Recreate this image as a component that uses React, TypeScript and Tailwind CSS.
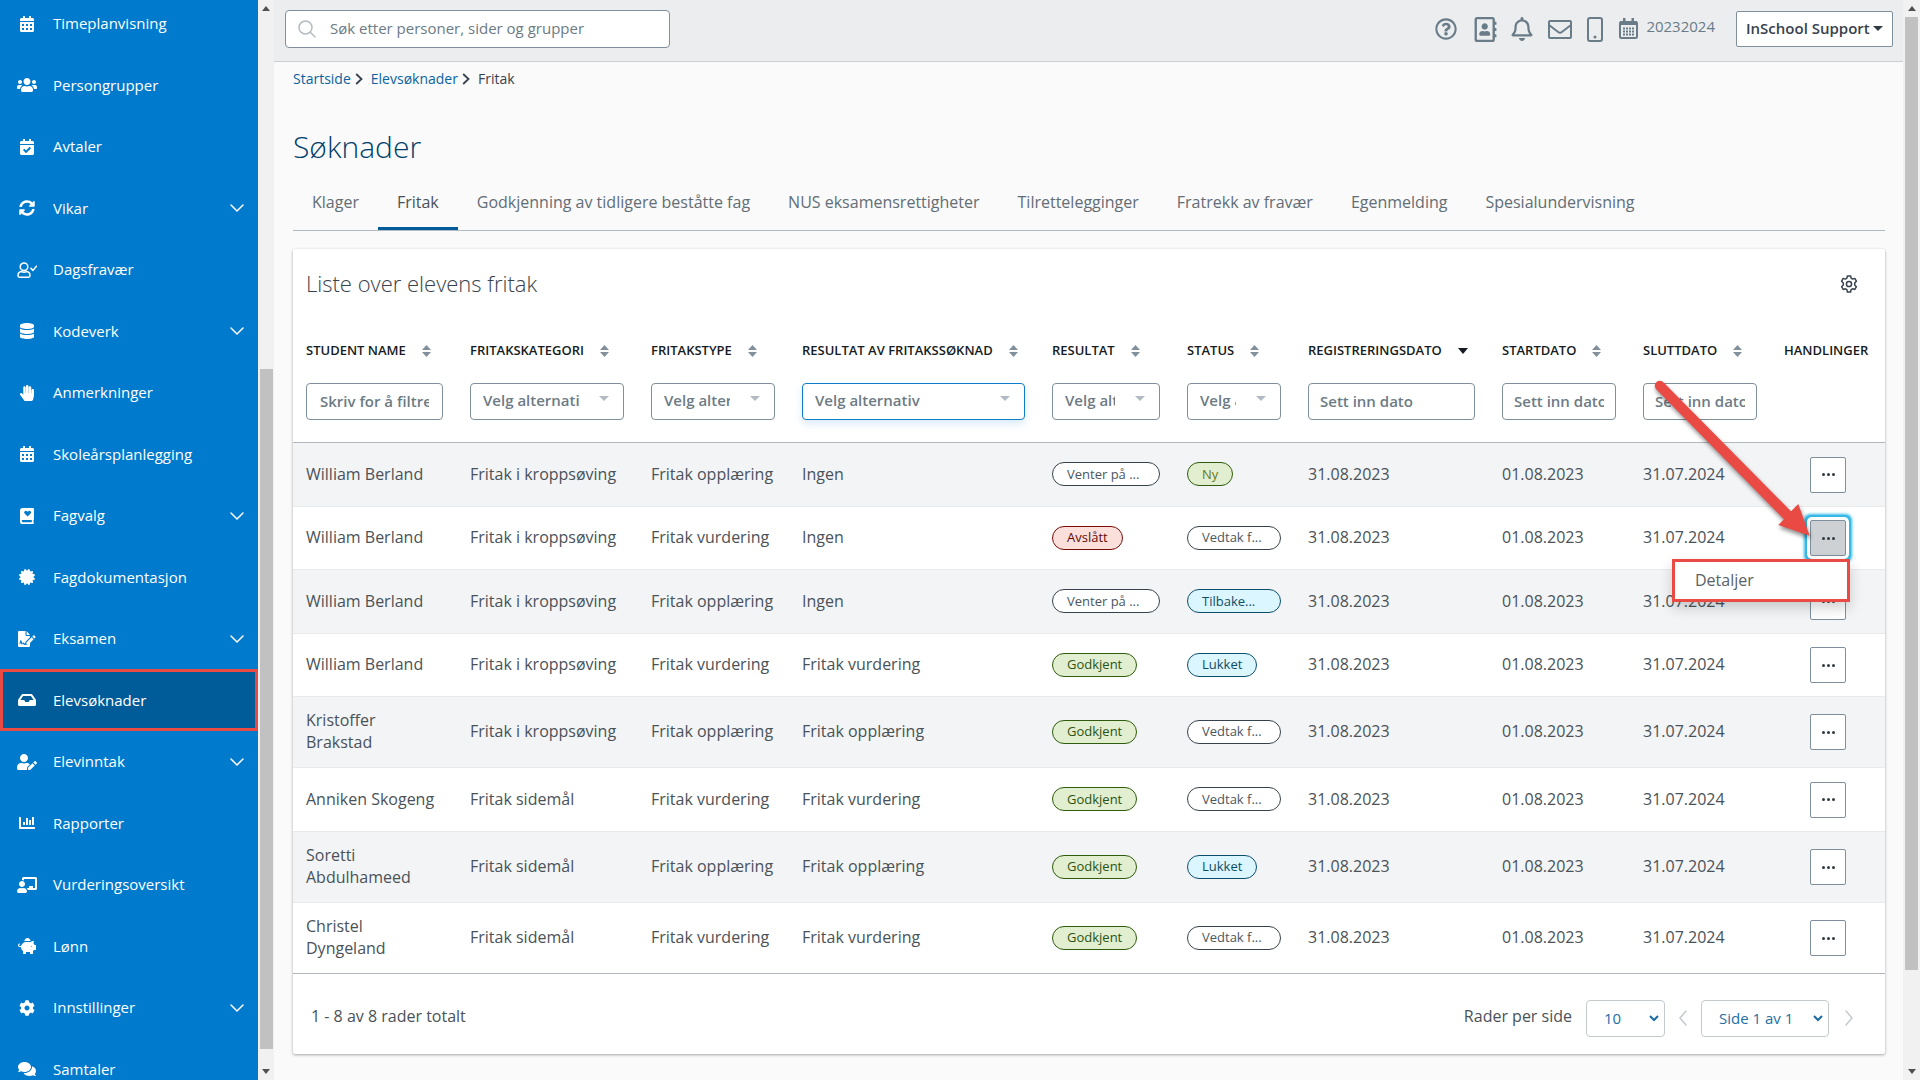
import React from "react";
import {
  FaCalendarAlt, FaUsers, FaCalendarCheck, FaSyncAlt, FaDatabase, FaHandPaper, FaCertificate, FaInbox, FaUserEdit,
  FaChartBar, FaChalkboardTeacher, FaPiggyBank, FaCog, FaComments, FaRegQuestionCircle, FaRegAddressBook, FaRegBell,
} from "react-icons/fa";

type IconProps = { className?: string };

const UserCheck = ({ className }: IconProps) => (
  <svg className={className} viewBox="0 0 20 16" fill="none" stroke="currentColor" strokeWidth="1.5" strokeLinecap="round" strokeLinejoin="round" aria-hidden="true">
    <circle cx="7" cy="4.8" r="3.8" />
    <path d="M4.6 9.6C2.4 9.8 1 11.6 1 13.6c0 1 .5 1.6 1.4 1.6h9.2c.9 0 1.4-.6 1.4-1.6 0-2-1.4-3.8-3.6-4-1.5.7-3.3.7-4.8 0z" />
    <path d="M14 6.4l2 2 3.4-4.2" />
  </svg>
);

const HeartBook = ({ className }: IconProps) => (
  <svg className={className} viewBox="0 0 14 16" aria-hidden="true">
    <path fill="currentColor" fillRule="evenodd" d="M2.6 0H13a1 1 0 0 1 1 1v10a1 1 0 0 1-.5.9v2.3a.9.9 0 0 1 .5.8 1 1 0 0 1-1 1H2.6A2.6 2.6 0 0 1 0 13.400V2.6A2.6 2.6 0 0 1 2.6 0zM2.8 12a1 1 0 0 0 0 2.200h9V12zM7.6 8.6l3-3a1.7 1.7 0 0 0-2.400-2.400l-.6.6-.6-.6a1.7 1.7 0 0 0-2.400 2.400z" />
  </svg>
);

const FileSign = ({ className }: IconProps) => (
  <svg className={className} viewBox="0 0 18 16" aria-hidden="true">
    <path fill="currentColor" fillRule="evenodd" d="M1 0h6.5v4a1 1 0 0 0 1 1H12v1.300L7.3 11v1.800c-.5 0-.8-.2-1-.7-.5-.9-1.600-.9-2.100-.1l-.8-2.200c-.2-.6-1-.6-1.200 0L1.400 13h.9l.5-1.500.6 1.700c.2.400.7.400.9.100l.3-.6c.1-.2.4-.2.5 0 .4.800 1.100 1.200 2.100 1.200h1.600l3.200-3V15a1 1 0 0 1-1 1H1a1 1 0 0 1-1-1V1a1 1 0 0 1 1-1z" />
    <path fill="currentColor" d="M8.6 0L12 3.9H8.6zM8.4 11.4l5.2-5.2 2.1 2.1-5.2 5.2H8.4zM14.3 5.5l.9-.9a.9.9 0 0 1 1.200 0l.9.9a.9.9 0 0 1 0 1.200l-.9.9z" />
  </svg>
);

const Mail = () => (
  <svg className="h-[19px] w-6" viewBox="0 0 24 19" fill="none" stroke="currentColor" strokeWidth="2" strokeLinejoin="round" aria-hidden="true">
    <rect x="1" y="1" width="22" height="17" rx="1" />
    <path d="M1 5l9.500 7.300a2.500 2.500 0 0 0 3 0L23 5" />
  </svg>
);

const Phone = () => (
  <svg className="h-[25px] w-4" viewBox="0 0 16 25" aria-hidden="true">
    <rect x="1" y="1" width="14" height="23" rx="2" fill="none" stroke="currentColor" strokeWidth="2" />
    <circle cx="8" cy="20" r="1.5" fill="currentColor" />
  </svg>
);

const Calendar = () => (
  <svg className="h-[21px] w-[19px]" viewBox="0 0 19 21" aria-hidden="true">
    <rect x="1" y="4" width="17" height="16" rx="1.5" fill="none" stroke="currentColor" strokeWidth="2" />
    <path fill="currentColor" d="M1 3h17v4H1zM4 0h2.500v4H4zM12.500 0H15v4h-2.500z" />
    <path stroke="currentColor" strokeWidth="2" strokeDasharray="2 1" d="M4 10.500h11M4 13.500h11M4 16.500h11" />
  </svg>
);

const Chevron = ({ className, d }: { className?: string; d: string }) => (
  <svg className={className} viewBox="0 0 16 16" fill="none" stroke="currentColor" strokeWidth="1.5" strokeLinecap="round" aria-hidden="true">
    <path d={d} />
  </svg>
);
const DOWN = "M2 5l6 6 6-6";
const RIGHT = "M5 1l6 7-6 7";
const LEFT = "M11 1L5 8l6 7";

const Crumb = () => (
  <svg className="mr-2 ml-1 h-3 w-2 text-[#37424c]" viewBox="0 0 8 12" fill="none" stroke="currentColor" strokeWidth="1.8" aria-hidden="true">
    <path d="M1.200 1L6.500 6l-5.300 5" />
  </svg>
);

const Gear = () => (
  <svg className="size-[18px]" viewBox="0 0 18 18" fill="none" stroke="currentColor" strokeWidth="1.5" strokeLinejoin="round" aria-hidden="true">
    <circle cx="9" cy="9" r="2.6" />
    <path d="M7.400 1h3.200l.5 2.200 1.500.9 2.200-.7 1.600 2.800L14.700 8v2l1.700 1.700-1.600 2.800-2.200-.7-1.500.9-.5 2.300H7.400l-.5-2.300-1.500-.9-2.200.7-1.600-2.800L3.300 10V8L1.600 6.200l1.600-2.800 2.200.7 1.500-.9z" />
  </svg>
);

const menu: { label: string; icon: React.ComponentType<IconProps>; sub?: boolean; active?: boolean }[] = [
  { label: "Timeplanvisning", icon: FaCalendarAlt },
  { label: "Persongrupper", icon: FaUsers },
  { label: "Avtaler", icon: FaCalendarCheck },
  { label: "Vikar", icon: FaSyncAlt, sub: true },
  { label: "Dagsfravær", icon: UserCheck },
  { label: "Kodeverk", icon: FaDatabase, sub: true },
  { label: "Anmerkninger", icon: FaHandPaper },
  { label: "Skoleårsplanlegging", icon: FaCalendarAlt },
  { label: "Fagvalg", icon: HeartBook, sub: true },
  { label: "Fagdokumentasjon", icon: FaCertificate },
  { label: "Eksamen", icon: FileSign, sub: true },
  { label: "Elevsøknader", icon: FaInbox, active: true },
  { label: "Elevinntak", icon: FaUserEdit, sub: true },
  { label: "Rapporter", icon: FaChartBar },
  { label: "Vurderingsoversikt", icon: FaChalkboardTeacher },
  { label: "Lønn", icon: FaPiggyBank },
  { label: "Innstillinger", icon: FaCog, sub: true },
  { label: "Samtaler", icon: FaComments },
];

const tabs = ["Klager", "Fritak", "Godkjenning av tidligere beståtte fag", "NUS eksamensrettigheter", "Tilrettelegginger", "Fratrekk av fravær", "Egenmelding", "Spesialundervisning"];

const columns: { label: string; width: string; filter?: "text" | "select" | "date"; focus?: boolean; sorted?: boolean }[] = [
  { label: "STUDENT NAME", width: "w-[164px]", filter: "text" },
  { label: "FRITAKSKATEGORI", width: "w-[181px]", filter: "select" },
  { label: "FRITAKSTYPE", width: "w-[151px]", filter: "select" },
  { label: "RESULTAT AV FRITAKSSØKNAD", width: "w-[250px]", filter: "select", focus: true },
  { label: "RESULTAT", width: "w-[135px]", filter: "select" },
  { label: "STATUS", width: "w-[121px]", filter: "select" },
  { label: "REGISTRERINGSDATO", width: "w-[194px]", filter: "date", sorted: true },
  { label: "STARTDATO", width: "w-[141px]", filter: "date" },
  { label: "SLUTTDATO", width: "w-[141px]", filter: "date" },
  { label: "HANDLINGER", width: "w-[114px]" },
];

type Tone = "plain" | "green" | "lime" | "red" | "cyan";
const tones: Record<Tone, string> = {
  plain: "border-[#37424c] bg-white text-[#4d565d]",
  green: "border-[#2f5c0c] bg-[#e2eed0] text-[#2c5410]",
  lime: "border-[#2f5c0c] bg-[#e2eed0] text-[#6b7a14]",
  red: "border-[#7a0c06] bg-[#fbdfdb] text-[#5f0b06]",
  cyan: "border-[#0b4f6c] bg-[#dcf6ff] text-[#0c4d66]",
};

const wait: [string, Tone] = ["Venter på ...", "plain"];
const ok: [string, Tone] = ["Godkjent", "green"];
const decided: [string, Tone] = ["Vedtak f...", "plain"];
const closed: [string, Tone] = ["Lukket", "cyan"];

const rows: { name: string; cat: string; type: string; res: string; result: [string, Tone]; status: [string, Tone]; height: string; open?: boolean }[] = [
  { name: "William Berland", cat: "Fritak i kroppsøving", type: "Fritak opplæring", res: "Ingen", result: wait, status: ["Ny", "lime"], height: "h-16" },
  { name: "William Berland", cat: "Fritak i kroppsøving", type: "Fritak vurdering", res: "Ingen", result: ["Avslått", "red"], status: decided, height: "h-[63px]", open: true },
  { name: "William Berland", cat: "Fritak i kroppsøving", type: "Fritak opplæring", res: "Ingen", result: wait, status: ["Tilbake...", "cyan"], height: "h-16" },
  { name: "William Berland", cat: "Fritak i kroppsøving", type: "Fritak vurdering", res: "Fritak vurdering", result: ok, status: closed, height: "h-[63px]" },
  { name: "Kristoffer Brakstad", cat: "Fritak i kroppsøving", type: "Fritak opplæring", res: "Fritak opplæring", result: ok, status: decided, height: "h-[71px]" },
  { name: "Anniken Skogeng", cat: "Fritak sidemål", type: "Fritak vurdering", res: "Fritak vurdering", result: ok, status: decided, height: "h-16" },
  { name: "Soretti Abdulhameed", cat: "Fritak sidemål", type: "Fritak opplæring", res: "Fritak opplæring", result: ok, status: closed, height: "h-[71px]" },
  { name: "Christel Dyngeland", cat: "Fritak sidemål", type: "Fritak vurdering", res: "Fritak vurdering", result: ok, status: decided, height: "h-[71px]" },
];

function Pill({ value: [text, tone] }: { value: [string, Tone] }) {
  const width = text.endsWith("...") ? "w-full" : "";
  return <span className={`inline-flex h-6 items-center rounded-full border px-3.5 text-[13px] whitespace-nowrap align-middle ${width} ${tones[tone]}`}>{text}</span>;
}

function Filter({ kind, label, focus }: { kind?: string; label: string; focus?: boolean }) {
  if (!kind) return <div className="h-[37px]" />;
  if (kind === "select")
    return (
      <div className="relative">
        <select aria-label={label} className={`block h-[37px] w-full appearance-none rounded border bg-white pr-11 pb-0.5 pl-3 text-[15px] font-semibold text-[#6c7b84] ${focus ? "border-[#0d7dc9] shadow-[0_4px_8px_rgba(0,122,204,0.15)]" : "border-[#7f8f9c]"}`}>
          <option>Velg alternativ</option>
        </select>
        <svg className="pointer-events-none absolute top-[13px] right-[15px] h-[5px] w-2.5" viewBox="0 0 10 5" aria-hidden="true"><path d="M0 0h10L5 5z" fill="#b1bbc1" /></svg>
      </div>
    );
  return (
    <input
      aria-label={label}
      placeholder={kind === "date" ? "Sett inn dato" : "Skriv for å filtrere"}
      className={`block h-[37px] w-full rounded border border-[#7f8f9c] bg-white pb-0.5 text-[15px] font-semibold placeholder:text-[#6c7b84] ${kind === "date" ? "px-[11px]" : "px-[13px]"}`}
    />
  );
}

function SortIcon({ sorted }: { sorted?: boolean }) {
  return sorted ? (
    <svg className="h-1.5 w-2.5" viewBox="0 0 10 6" aria-hidden="true"><path d="M0 0h10L5 6z" fill="#161c22" /></svg>
  ) : (
    <svg className="h-3 w-[9px]" viewBox="0 0 9 12" aria-hidden="true"><path d="M4.500 0L9 5H0zM4.500 12L0 7h9z" fill="#82909b" /></svg>
  );
}

function Actions({ open }: { open?: boolean }) {
  const state = open
    ? "bg-[#cdd1d4] shadow-[0_0_0_3px_#ffffff,0_0_0_5px_#35b9e6,0_0_3px_6px_#35b9e6]"
    : "bg-white";
  return (
    <div className="relative mx-auto size-9">
      <button aria-label="Handlinger" className={`flex size-9 items-center justify-center gap-0.5 rounded-xs border border-[#7f8f9c] ${state}`}>
        <span className="size-[3px] rounded-full bg-[#2f3a43]" />
        <span className="size-[3px] rounded-full bg-[#2f3a43]" />
        <span className="size-[3px] rounded-full bg-[#2f3a43]" />
      </button>
      {open && (
        <>
          <div role="menu" className="absolute top-[39px] -right-1 z-10 w-[178px] border-3 border-[#e94b44] bg-white shadow-[0_6px_12px_rgba(0,0,0,0.18)]">
            <button role="menuitem" className="block h-[37px] w-full px-5 pb-0.5 text-left text-base text-[#5a6167]">Detaljer</button>
          </div>
          <svg className="pointer-events-none absolute -top-36 -left-40 z-20 size-44 drop-shadow-[1px_3px_2px_rgba(0,0,0,0.45)]" viewBox="0 0 176 176" aria-hidden="true">
            <path fill="#e94b44" d="M13.600 6.400A5 5 0 0 0 6 13L134 143.300 128.300 149 159.700 159.700 148.300 128 141 135.300z" />
          </svg>
        </>
      )}
    </div>
  );
}

function PageSelect({ label, width, text }: { label: string; width: string; text: string }) {
  return (
    <div className={`relative ${width}`}>
      <select aria-label={label} className="block h-[37px] w-full appearance-none rounded border border-[#c5cace] bg-white pl-[17px] text-[15px] text-[#2470a3]">
        <option>{text}</option>
      </select>
      <svg className="pointer-events-none absolute top-[15px] right-1.5 h-[7px] w-2.5" viewBox="0 0 10 7" fill="none" stroke="#1a6aa3" strokeWidth="2" aria-hidden="true"><path d="M1 1l4 4 4-4" /></svg>
    </div>
  );
}

function ScrollBar({ thumb, width }: { thumb: string; width: string }) {
  return (
    <div aria-hidden="true" className={`flex shrink-0 flex-col items-center bg-[#f1f1f1] ${width}`}>
      <svg className="my-1.5 h-[5px] w-2 shrink-0" viewBox="0 0 8 5"><path d="M4 0l4 5H0z" fill="#505050" /></svg>
      <div className={`w-[13px] bg-[#c1c1c1] ${thumb}`} />
      <svg className="mt-auto mb-1.5 h-[5px] w-2 shrink-0" viewBox="0 0 8 5"><path d="M0 0h8L4 5z" fill="#505050" /></svg>
    </div>
  );
}

export default function App() {
  return (
    <div className="flex h-screen overflow-hidden bg-[#fafafa] font-['Open_Sans',sans-serif] text-base text-[#4a5258]">
      <nav aria-label="Hovedmeny" className="w-[258px] shrink-0 overflow-hidden bg-[#007acc] text-white">
        <ul className="-mt-[7px]">
          {menu.map(({ label, icon: Icon, sub, active }) => (
            <li key={label} className="odd:h-[61px] even:h-[62px]">
              <a href="#" className={`flex h-full items-center text-[15px] font-medium ${active ? "border-3 border-[#e94b44] bg-[#005c99] pl-3.5" : "pr-[13px] pl-[17px]"}`}>
                <Icon className="mr-4 h-4 w-5 shrink-0" />
                <span className="flex-1">{label}</span>
                {sub && <Chevron d={DOWN} className="size-4" />}
              </a>
            </li>
          ))}
        </ul>
      </nav>
      <ScrollBar width="w-4" thumb="mt-[352px] h-[680px]" />

      <div className="flex min-w-0 flex-1 flex-col">
        <header className="flex h-[62px] shrink-0 items-center border-b border-[#c8ced3] bg-[#ecedef] pr-2.5 pb-[3px] pl-[11px] text-[#697c88]">
          <label className="flex h-[38px] w-[385px] items-center rounded border border-[#7f8f9c] bg-white pl-3">
            <svg className="mr-3.5 size-[18px] shrink-0 text-[#b4bcc2]" viewBox="0 0 18 18" fill="none" stroke="currentColor" strokeWidth="1.5" strokeLinecap="round" aria-hidden="true">
              <circle cx="7.5" cy="7.5" r="6.5" />
              <path d="M12.300 12.300L17 17" />
            </svg>
            <input aria-label="Søk" placeholder="Søk etter personer, sider og grupper" className="min-w-0 flex-1 pb-0.5 text-[15px] outline-none placeholder:text-[#6c7b84]" />
          </label>
          <div className="ml-auto flex items-center">
            <button aria-label="Hjelp" className="mr-4"><FaRegQuestionCircle className="size-[22px]" /></button>
            <button aria-label="Adressebok" className="mr-3"><FaRegAddressBook className="size-[25px]" /></button>
            <button aria-label="Varsler" className="mr-3.5"><FaRegBell className="size-6" /></button>
            <button aria-label="Meldinger" className="mr-[15px]"><Mail /></button>
            <button aria-label="Mobil" className="mr-4"><Phone /></button>
            <button className="mr-[21px] flex items-center gap-2 pb-0.5 text-[15px] font-medium"><Calendar /><span className="pb-1">20232024</span></button>
            <button className="flex h-9 w-[157px] items-center justify-between rounded-xs border border-[#7f8f9c] bg-white px-[9px] pb-0.5 text-[15px] font-semibold whitespace-nowrap text-[#37424c]">
              InSchool Support
              <svg className="h-[5px] w-2.5" viewBox="0 0 10 5" aria-hidden="true"><path d="M0 0h10L5 5z" fill="#2f3a43" /></svg>
            </button>
          </div>
        </header>

        <main className="pr-[18px] pl-[19px]">
          <nav aria-label="Brødsmuler" className="flex items-center pt-[7px] text-sm text-[#0b63a0]">
            <a href="#">Startside</a>
            <Crumb />
            <a href="#">Elevsøknader</a>
            <Crumb />
            <span className="font-medium text-[#37424c]">Fritak</span>
          </nav>
          <h1 className="mt-[38px] text-[30px] leading-10 font-light text-[#003e6b]">Søknader</h1>

          <div role="tablist" className="mt-3.5 flex border-b border-[#b1bac2] text-[#626d75]">
            {tabs.map((tab, i) => (
              <button key={tab} role="tab" aria-selected={i === 1} className={`h-[49px] border-b-3 px-[19px] pb-1 whitespace-nowrap ${i === 1 ? "border-[#005c99] text-[#4a5258]" : "border-transparent"}`}>{tab}</button>
            ))}
          </div>

          <section className="mt-[18px] rounded-xs bg-white shadow-[0_1px_3px_rgba(0,0,0,0.35)]">
            <div className="flex h-[70px] items-center justify-between pr-[27px] pl-[13px]">
              <h2 className="pb-0.5 text-[22px] font-light text-[#37424c]">Liste over elevens fritak</h2>
              <button aria-label="Innstillinger" className="text-[#37424c]"><Gear /></button>
            </div>
            <table className="w-full table-fixed border-collapse">
              <thead>
                <tr>
                  {columns.map(({ label, width, filter, focus, sorted }) => (
                    <th key={label} className={`border-b border-[#b1b7bc] py-[22px] pr-3.5 pl-[13px] text-left align-top ${width}`}>
                      <div className="mb-[22px] flex h-5 items-center gap-4 text-[13px] font-semibold whitespace-nowrap text-[#161c22]">
                        {label}
                        {filter && <SortIcon sorted={sorted} />}
                      </div>
                      <Filter kind={filter} label={label} focus={focus} />
                    </th>
                  ))}
                </tr>
              </thead>
              <tbody>
                {rows.map((r, i) => (
                  <tr key={i} className={`border-b border-[#e8eaec] odd:bg-[#f3f4f6] last:border-[#b1b7bc] ${r.height}`}>
                    <td className="px-[13px] pb-0.5 leading-[22px]">{r.name}</td>
                    <td className="pb-0.5 pl-[13px] whitespace-nowrap">{r.cat}</td>
                    <td className="pb-0.5 pl-[13px] whitespace-nowrap">{r.type}</td>
                    <td className="pb-0.5 pl-[13px]">{r.res}</td>
                    <td className="pr-3.5 pb-0.5 pl-[13px]"><Pill value={r.result} /></td>
                    <td className="pr-3.5 pb-0.5 pl-[13px]"><Pill value={r.status} /></td>
                    <td className="pb-0.5 pl-[13px]">31.08.2023</td>
                    <td className="pb-0.5 pl-[13px]">01.08.2023</td>
                    <td className="pb-0.5 pl-[13px]">31.07.2024</td>
                    <td><Actions open={r.open} /></td>
                  </tr>
                ))}
              </tbody>
            </table>
            <footer className="flex h-20 items-center pt-2 pr-7 pl-[18px]">
              <span className="flex-1 pb-1">1 - 8 av 8 rader totalt</span>
              <span className="mr-3.5 pb-1">Rader per side</span>
              <PageSelect label="Rader per side" width="w-[79px]" text="10" />
              <button aria-label="Forrige side" className="mx-2.5 text-[#c5cace]"><Chevron d={LEFT} className="size-4" /></button>
              <PageSelect label="Side" width="w-32" text="Side 1 av 1" />
              <button aria-label="Neste side" className="ml-3 text-[#c5cace]"><Chevron d={RIGHT} className="size-4" /></button>
            </footer>
          </section>
        </main>
      </div>
      <ScrollBar width="w-[17px]" thumb="h-[953px]" />
    </div>
  );
}
